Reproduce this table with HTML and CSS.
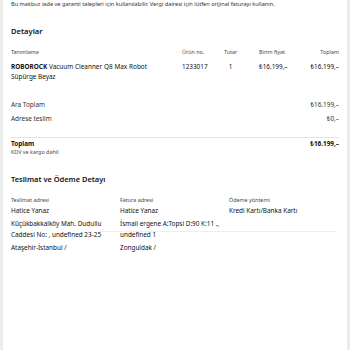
FILE: index.html
```html
<!DOCTYPE html>
<html lang="tr">
<head>
<meta charset="utf-8">
<link rel="stylesheet" href="styles.css">
</head>
<body>
<div class="card">
  <p class="note">Bu makbuz iade ve garanti talepleri için kullanılabilir. Vergi dairesi için lütfen orijinal faturayı kullanın.</p>

  <h2 class="title">Detaylar</h2>

  <div class="table">
    <div class="th">Tanımlama</div>
    <div class="th">Ürün no.</div>
    <div class="th qty">Tutar</div>
    <div class="th">Birim fiyat</div>
    <div class="th right">Toplam</div>

    <div class="td desc"><b>ROBOROCK</b> Vacuum Cleanner Q8 Max Robot Süpürge Beyaz</div>
    <div class="td">1233017</div>
    <div class="td qty">1</div>
    <div class="td">₺16.199,–</div>
    <div class="td right">₺16.199,–</div>
  </div>

  <div class="sums">
    <div class="sum-row"><span>Ara Toplam</span><span>₺16.199,–</span></div>
    <div class="sum-row"><span>Adrese teslim</span><span>₺0,–</span></div>
  </div>

  <div class="total">
    <div class="total-row"><span>Toplam</span><span>₺16.199,–</span></div>
    <div class="small">KDV ve kargo dahil</div>
  </div>

  <h3 class="subtitle">Teslimat ve Ödeme Detayı</h3>

  <div class="addresses">
    <span class="faint-line"></span>
    <div class="col">
      <div class="th">Teslimat adresi</div>
      <div class="line">Hatice Yanaz</div>
      <div class="line">Küçükbakkalköy Mah. Dudullu Caddesi No: , undefined 23-25</div>
      <div class="line">Ataşehir-İstanbul /</div>
    </div>
    <div class="col">
      <div class="th">Fatura adresi</div>
      <div class="line">Hatice Yanaz</div>
      <div class="line">İsmail ergene A:Topsi D:90 K:11 ., undefined 1</div>
      <div class="line">Zonguldak /</div>
    </div>
    <div class="col">
      <div class="th">Ödeme yöntemi</div>
      <div class="line">Kredi Kartı/Banka Kartı</div>
    </div>
  </div>
</div>
</body>
</html>
```

FILE: styles.css
```css
html, body {
  margin: 0;
  padding: 0;
}
body {
  background: #ececec;
  font-family: "Noto Sans", "Open Sans", "DejaVu Sans", sans-serif;
  color: #111;
  width: 350px;
  height: 350px;
  overflow: hidden;
}
.card {
  background: #fff;
  margin: 0 3px;
  height: 350px;
  padding: 0 8px;
  box-sizing: border-box;
}
.note {
  margin: 0;
  font-size: 5.6px;
  line-height: 8px;
  color: #333;
}
.title {
  margin: 17px 0 0;
  font-size: 7.6px;
  line-height: 12px;
  font-weight: 600;
  color: #111;
}
.table {
  margin-top: 11px;
  display: grid;
  grid-template-columns: 171px 42px 35px 1fr 1fr;
  row-gap: 6px;
}
.th {
  font-size: 5.4px;
  line-height: 8px;
  color: #484848;
}
.td {
  font-size: 6.4px;
  line-height: 10px;
  color: #111;
}
.td b {
  font-weight: 700;
}
.desc {
  padding-right: 35px;
  text-align: justify;
}
.qty {
  width: 13px;
  text-align: center;
}
.right {
  text-align: right;
}
.sums {
  margin-top: 16px;
  padding-bottom: 11px;
  border-bottom: 1px solid #e5e5e5;
}
.sum-row {
  display: flex;
  justify-content: space-between;
  font-size: 6.4px;
  line-height: 14px;
  color: #333;
}
.total {
  padding-top: 1px;
}
.total-row {
  display: flex;
  justify-content: space-between;
  font-size: 6.4px;
  line-height: 9px;
  font-weight: 700;
  color: #111;
}
.small {
  font-size: 5.4px;
  line-height: 8px;
  color: #484848;
}
.subtitle {
  margin: 18px 0 0;
  font-size: 7.45px;
  line-height: 11px;
  font-weight: 600;
  color: #111;
}
.addresses {
  position: relative;
  margin-top: 11px;
  display: grid;
  grid-template-columns: 109px 109px 1fr;
}
.col {
  display: flex;
  flex-direction: column;
  gap: 2px;
}
.col .th {
  margin-bottom: -1px;
}
.line {
  font-size: 6.4px;
  line-height: 11px;
  color: #111;
  padding-right: 4px;
}
.faint-line {
  position: absolute;
  left: 89px;
  right: 2px;
  top: 35px;
  height: 1px;
  background: #eeeeee;
}
```
